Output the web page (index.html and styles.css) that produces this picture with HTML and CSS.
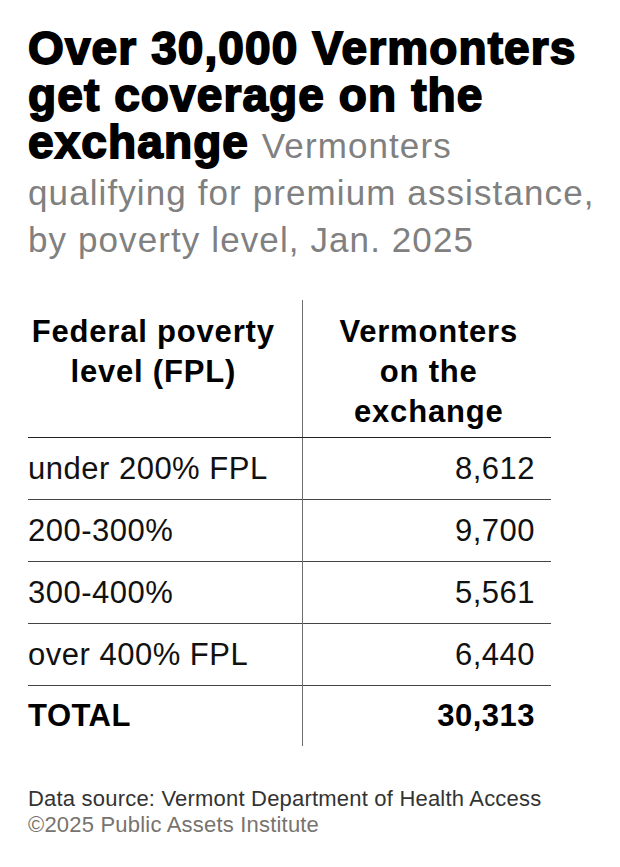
FILE: index.html
```html
<!DOCTYPE html>
<html lang="en">
<head>
<meta charset="utf-8">
<title>Over 30,000 Vermonters get coverage on the exchange</title>
<link rel="stylesheet" href="styles.css">
</head>
<body>
<div class="page">
  <h1 class="heading"><span class="title">Over 30,000 Vermonters get coverage on the exchange</span> <span class="subtitle">Vermonters qualifying for premium assistance, by poverty level, Jan. 2025</span></h1>

  <table class="data">
    <colgroup>
      <col class="c1">
      <col class="c2">
    </colgroup>
    <thead>
      <tr>
        <th class="col-a">Federal poverty level (FPL)</th>
        <th class="col-b">Vermonters on the exchange</th>
      </tr>
    </thead>
    <tbody>
      <tr><td class="col-a">under 200% FPL</td><td class="col-b">8,612</td></tr>
      <tr><td class="col-a">200-300%</td><td class="col-b">9,700</td></tr>
      <tr><td class="col-a">300-400%</td><td class="col-b">5,561</td></tr>
      <tr><td class="col-a">over 400% FPL</td><td class="col-b">6,440</td></tr>
      <tr class="total"><td class="col-a">TOTAL</td><td class="col-b">30,313</td></tr>
    </tbody>
  </table>

  <footer class="notes">
    <p class="source">Data source: Vermont Department of Health Access</p>
    <p class="copy">©2025 Public Assets Institute</p>
  </footer>
</div>
</body>
</html>
```

FILE: styles.css
```css
html, body {
  margin: 0;
  padding: 0;
  background: #ffffff;
}

.page {
  padding: 25px 14px 0 28px;
  font-family: "Liberation Sans", Arial, sans-serif;
  color: #000;
}

.heading {
  margin: 0;
  font-weight: normal;
  font-size: 46px;
  line-height: 47px;
}

.title {
  font-weight: 700;
  font-size: 46px;
  letter-spacing: 1.1px;
  -webkit-text-stroke: 1.8px #000;
  color: #000;
}

.subtitle {
  font-weight: 400;
  font-size: 35px;
  line-height: 38px;
  letter-spacing: 1.1px;
  color: #808080;
}

.data {
  margin-top: 40px;
  border-collapse: collapse;
  border-spacing: 0;
  width: 523px;
  table-layout: fixed;
}

.data .c1 {
  width: 274px;
}

.data .c2 {
  width: 249px;
}

.data th,
.data td {
  padding: 0;
}

.data .col-a {
  text-align: left;
}

.data .col-b {
  border-left: 1px solid #6e6e6e;
  text-align: right;
  padding-right: 16px;
}

.data th {
  font-weight: 700;
  font-size: 31px;
  line-height: 40px;
  letter-spacing: 0.8px;
  vertical-align: top;
  padding-top: 12px;
  padding-bottom: 5px;
  border-bottom: 1px solid #222;
}

.data th.col-a {
  text-align: center;
  padding-right: 23px;
}

.data th.col-b {
  text-align: center;
  padding-left: 30px;
  padding-right: 26px;
}

.data td {
  font-size: 31px;
  line-height: 61px;
  letter-spacing: 0.5px;
  color: #111;
  vertical-align: top;
}

.data tbody tr {
  border-bottom: 1px solid #444;
}

.data tbody tr.total {
  border-bottom: none;
}

.data tr.total td {
  font-weight: 700;
  line-height: 60px;
  color: #000;
}

.notes {
  margin-top: 40px;
  font-size: 22px;
  line-height: 26px;
  letter-spacing: 0.2px;
}

.notes p {
  margin: 0;
}

.source {
  color: #333;
}

.copy {
  color: #77736e;
}
```
